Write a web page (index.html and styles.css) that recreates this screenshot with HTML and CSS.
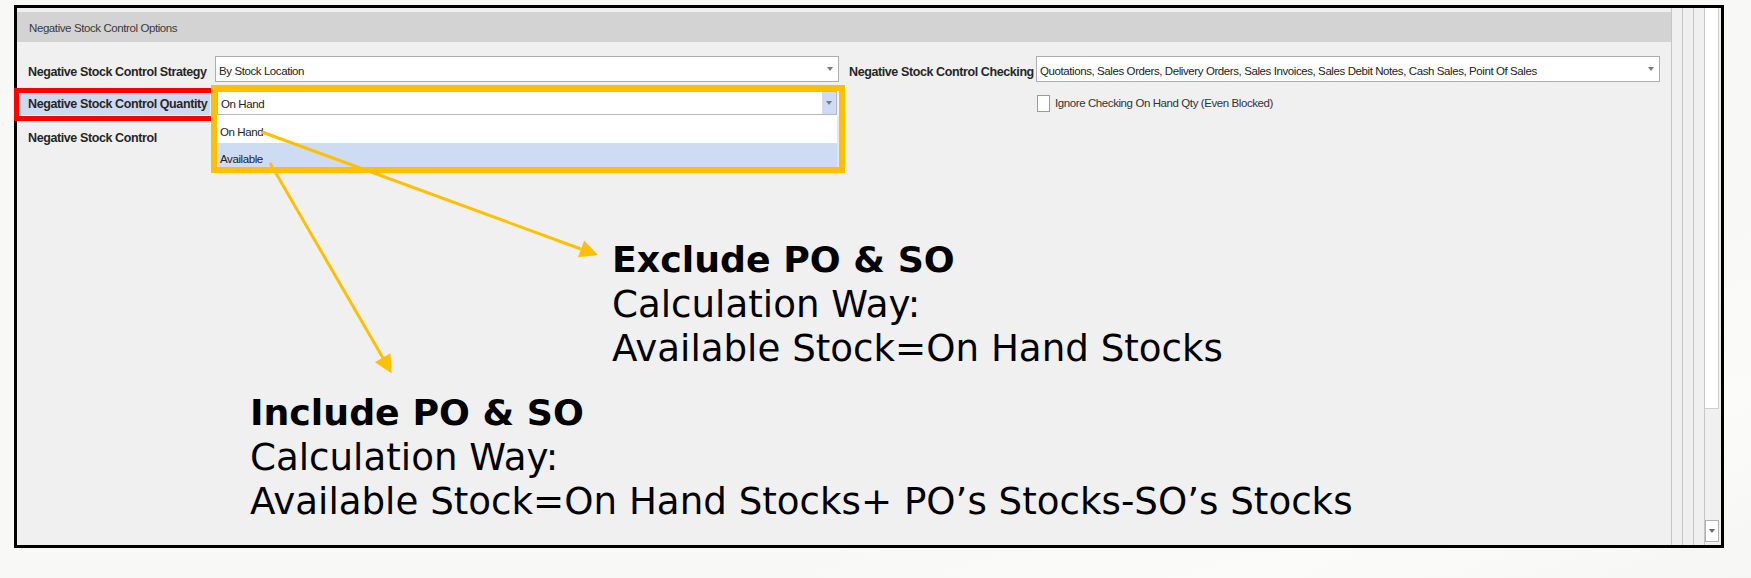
FILE: index.html
```html
<!DOCTYPE html>
<html lang="en">
<head>
    <meta charset="UTF-8">
    <title>Negative Stock Control Options</title>
    <link rel="stylesheet" href="styles.css">
</head>
<body>
    <div class="frame">
        <div class="panel">
            <div class="panel-head">Negative Stock Control Options</div>

            <!-- form rows -->
            <div class="form">
                <label class="lbl">Negative Stock Control Strategy</label>
                <div class="combo"><span class="val">By Stock Location</span><i class="caret"></i></div>
                <label class="lbl lbl2">Negative Stock Control Checking</label>
                <div class="combo"><span class="val">Quotations, Sales Orders, Delivery Orders, Sales Invoices, Sales Debit Notes, Cash Sales, Point Of Sales</span><i class="caret"></i></div>

                <label class="lbl hl">Negative Stock Control Quantity</label>
                <div class="combo-wrap">
                    <div class="combo open"><span class="val">On Hand</span><span class="btn"><i class="caret"></i></span></div>
                    <ul class="list">
                        <li>On Hand</li>
                        <li class="sel">Available</li>
                    </ul>
                    <div class="callout"></div>
                </div>
                <label class="check"><span class="box"></span>Ignore Checking On Hand Qty (Even Blocked)</label>

                <label class="lbl">Negative Stock Control</label>
            </div>

            <!-- notes -->
            <div class="note note-exclude">
                <b>Exclude PO &amp; SO</b>
                Calculation Way:<br>
                Available Stock=On Hand Stocks
            </div>
            <div class="note note-include">
                <b>Include PO &amp; SO</b>
                Calculation Way:<br>
                Available Stock=On Hand Stocks+ PO’s Stocks-SO’s Stocks
            </div>
        </div>
        <div class="splitter"><span></span><span></span><span></span></div>
        <div class="vscroll">
            <div class="thumb"></div>
            <div class="down"><i class="caret"></i></div>
        </div>
    </div>

    <svg class="arrows" width="1751" height="578" viewBox="0 0 1751 578">
        <line x1="262" y1="132" x2="581" y2="249" />
        <polygon points="598,255 578,257.3 584.2,240.4" />
        <line x1="270" y1="163" x2="383" y2="358" />
        <polygon points="391.7,373.3 374.9,362.2 390.5,353.2" />
    </svg>
</body>
</html>
```

FILE: styles.css
```css
/* khung ảnh chụp */
body { margin: 0; width: 1751px; height: 578px; overflow: hidden; position: relative; background: linear-gradient(160deg, #f8f8f6 70%, #fbfbfa 85%, #f6f6f4 100%); font-family: "Liberation Sans", Arial, sans-serif; color: #222; }
.frame { margin: 5px 0 0 14px; width: 1710px; height: 543px; box-sizing: border-box; border: 3px solid #000; display: flex; background: #f0f0f0; }
.panel { width: 1654px; padding-top: 4px; }
.panel-head { height: 30px; line-height: 32px; background: #d3d3d3; padding-left: 12px; font-size: 11.5px; letter-spacing: -0.41px; color: #3a3a3a; }

/* form */
.form { display: grid; grid-template-columns: 187px 624px 197px 624px; grid-template-rows: 26px 24px 24px; row-gap: 9px; padding: 14px 11px 0; }
.lbl { align-self: end; font-weight: bold; font-size: 12.5px; letter-spacing: -0.4px; line-height: 16px; padding-bottom: 2px; color: #262626; white-space: nowrap; }
.lbl2 { padding-left: 10px; }
.hl { height: 21px; box-sizing: border-box; padding: 2px 0 0 8px; margin: 0 5px 0 -8px; background: #cdd9ef; outline: 5px solid #ff0000; outline-offset: 1px; }
.combo { display: flex; align-items: center; background: #fff; border: 1px solid #adadad; box-sizing: border-box; height: 100%; font-size: 11.5px; letter-spacing: -0.41px; color: #222; }
.combo .val { flex: 1; align-self: flex-end; padding: 0 0 3px 3px; line-height: 14px; white-space: nowrap; overflow: hidden; }
.caret { display: block; width: 0; height: 0; border-left: 3px solid transparent; border-right: 3px solid transparent; border-top: 4px solid #7a7a7a; margin-right: 5px; }
.combo.open { margin: 0 2px; border-color: #b9b9b9; }
.combo .btn { width: 14px; height: 100%; background: #cddcf2; display: flex; align-items: center; justify-content: center; }
.combo .btn .caret { margin: 0; }
.combo-wrap { position: relative; }
.list { position: absolute; left: 2px; right: 2px; top: 24px; margin: 0; padding: 0; list-style: none; background: #fff; font-size: 11.5px; letter-spacing: -0.41px; color: #222; box-shadow: 0 4px 5px rgba(0, 0, 0, .12); }
.list li { height: 28px; box-sizing: border-box; display: flex; align-items: flex-end; padding: 0 0 4px 3px; line-height: 14px; }
.list li.sel { height: 24px; padding-bottom: 1px; background: #cddcf2; }
.callout { position: absolute; left: -4px; top: -6px; width: 634px; height: 88px; box-sizing: border-box; border: 6px solid #ffc000; }
.check { grid-column: 4; display: flex; align-items: flex-start; gap: 5px; padding: 4px 0 0 1px; font-size: 11.5px; letter-spacing: -0.41px; line-height: 17px; color: #333; white-space: nowrap; }
.check .box { width: 13px; height: 17px; box-sizing: border-box; border: 1px solid #9a9a9a; background: #fff; }

/* chú thích */
.note { font-family: "DejaVu Sans", Verdana, sans-serif; font-size: 37.2px; line-height: 44px; color: #000; white-space: nowrap; }
.note b { display: block; font-size: 36.3px; }
.note-exclude { margin: 90px 0 0 595px; }
.note-include { margin: 21px 0 0 233px; }

/* thanh cuộn bên phải */
.splitter { display: flex; width: 33px; }
.splitter span { width: 11px; box-sizing: border-box; border-left: 1px solid #c6c6c6; }
.vscroll { width: 17px; box-sizing: border-box; border-left: 1px solid #c6c6c6; display: flex; flex-direction: column; }
.thumb { width: 14px; height: 401px; box-sizing: border-box; background: #fff; border-right: 1px solid #cfcfcf; border-bottom: 1px solid #cfcfcf; }
.down { margin-top: auto; margin-bottom: 3px; width: 14px; height: 22px; box-sizing: border-box; border: 1px solid #b0b0b0; background: #fff; display: flex; align-items: center; justify-content: center; }
.down .caret { margin: 0; border-top-color: #666; }

.arrows { position: absolute; left: 0; top: 0; pointer-events: none; }
.arrows line { stroke: #ffc000; stroke-width: 3; }
.arrows polygon { fill: #ffc000; }
```
